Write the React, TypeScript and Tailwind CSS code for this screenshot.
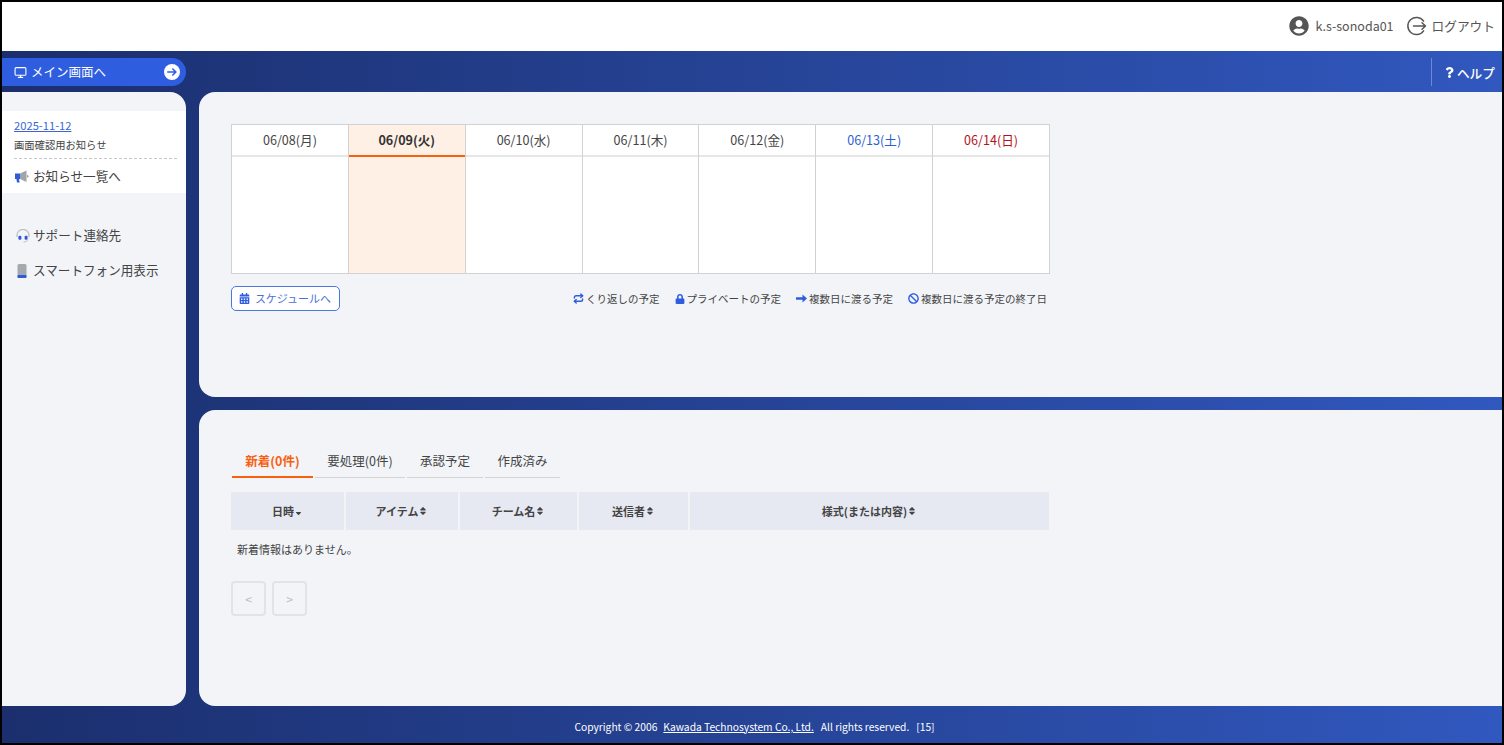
import React from 'react';
import { FaBan, FaCalendarAlt, FaLock, FaQuestion, FaSort, FaSortDown, FaUserCircle } from 'react-icons/fa';
import { Monitor, Repeat } from 'lucide-react';

const days = [
  { label: '06/08(月)', color: 'text-[#444]' },
  { label: '06/09(火)', color: 'text-[#333]', today: true },
  { label: '06/10(水)', color: 'text-[#444]' },
  { label: '06/11(木)', color: 'text-[#444]' },
  { label: '06/12(金)', color: 'text-[#444]' },
  { label: '06/13(土)', color: 'text-[#2f5fd0]' },
  { label: '06/14(日)', color: 'text-[#b5131c]' },
];

const tabs = [
  { label: '新着(0件)', width: 'w-[81px]', active: true },
  { label: '要処理(0件)', width: 'w-[90px]' },
  { label: '承認予定', width: 'w-[76px]' },
  { label: '作成済み', width: 'w-[75px]' },
];

const columns = [
  { label: '日時', width: 'w-[113px]', down: true },
  { label: 'アイテム', width: 'w-[112px]' },
  { label: 'チーム名', width: 'w-[117px]' },
  { label: '送信者', width: 'w-[109px]' },
  { label: '様式(または内容)', width: 'w-[359px]' },
];

function LogoutIcon() {
  return (
    <svg width="20" height="20" viewBox="0 0 20 20" fill="none" stroke="#555" strokeWidth="1.5" strokeLinecap="round" strokeLinejoin="round">
      <path d="M16.6 5.2A8.6 8.6 0 1 0 16.6 14.8" />
      <path d="M6.5 10H18.5M15 6.8L18.5 10L15 13.2" />
    </svg>
  );
}

function GoIcon() {
  return (
    <svg width="16" height="16" viewBox="0 0 16 16" fill="none" stroke="#2f5de0" strokeWidth="1.6" strokeLinecap="round" strokeLinejoin="round">
      <circle cx="8" cy="8" r="8" fill="#fff" stroke="none" />
      <path d="M3.8 8H11.8M8.8 5L11.9 8L8.8 11" />
    </svg>
  );
}

function ThickArrowIcon() {
  return (
    <svg width="11" height="9" viewBox="0 0 11 9" fill="#2f5de0">
      <path d="M0 3.2H6.5V0.6L11 4.5L6.5 8.4V5.8H0Z" />
    </svg>
  );
}

function MegaphoneIcon() {
  return (
    <svg width="14" height="13" viewBox="0 0 14 13">
      <path d="M0 3.5H5V9H4L4.6 12.6H2L1.4 9H0Z" fill="#2f5bd8" />
      <path d="M5 3.5L11.5 0.5V12L5 9Z" fill="#a0a4ab" />
      <path d="M12 4.5L14 6.2L12 8Z" fill="#a0a4ab" />
    </svg>
  );
}

function HeadsetIcon() {
  return (
    <svg width="14" height="14" viewBox="0 0 14 14" fill="none">
      <path d="M1 8V6.4A6 6 0 0 1 13 6.4V8" stroke="#bcc0c6" strokeWidth="1.3" />
      <rect x="2.4" y="6.8" width="3" height="4" rx="1.2" fill="#2f5bd8" />
      <rect x="8.6" y="6.8" width="3" height="4" rx="1.2" fill="#2f5bd8" />
      <path d="M12 10.4C11.2 12.6 9.4 13 7.5 13" stroke="#bcc0c6" strokeWidth="1" />
    </svg>
  );
}

function PhoneIcon() {
  return (
    <svg width="10" height="14" viewBox="0 0 10 14">
      <rect x="0.5" y="0" width="9" height="14" rx="1.5" fill="#a4a8af" />
      <rect x="0.5" y="11" width="9" height="3" rx="1" fill="#2f5bd8" />
    </svg>
  );
}

function Legend({ icon, label }: { icon: React.ReactNode; label: string }) {
  return (
    <span className="flex items-center gap-[2px]">
      {icon}
      <span>{label}</span>
    </span>
  );
}

export default function App() {
  return (
    <div className="h-[745px] w-[1504px] overflow-hidden border-2 border-black bg-white text-[#444] [font-family:'Noto_Sans_CJK_JP','Noto_Sans',sans-serif]">
      <header className="flex h-[49px] items-center justify-end pr-[7px] pb-[1px] text-[#555]">
        <FaUserCircle className="mr-[6px] text-[20px] text-[#555]" />
        <span className="text-[12.5px]">k.s-sonoda01</span>
        <span className="mr-[5px] ml-[13px]">
          <LogoutIcon />
        </span>
        <span className="text-[12.7px]">ログアウト</span>
      </header>

      <div className="flex h-[692px] flex-col bg-gradient-to-r from-[#1b2f6e] to-[#3158bf]">
        <nav className="flex h-[41px] shrink-0 justify-between">
          <a className="mt-[7px] flex h-[28px] w-[184px] items-center rounded-r-[14px] bg-[#2f5de0] pr-[6px] pl-[12px] text-[12.5px] text-white">
            <Monitor size={13} strokeWidth={2} className="mr-[4px]" />
            <span className="flex-1 pt-[1px]">メイン画面へ</span>
            <GoIcon />
          </a>
          <div className="mt-[7px] mr-[7px] flex h-[28px] items-center border-l border-[#6f88cf] pt-[1px] pl-[12px] text-[12.7px] font-medium text-white">
            <FaQuestion className="text-[11px]" />
            <span className="ml-[2px]">ヘルプ</span>
          </div>
        </nav>

        <div className="flex h-[614px] shrink-0 gap-[13px]">
          <aside className="w-[184px] shrink-0 rounded-r-[16px] bg-[#f2f4f8] pt-[19px] text-[12.6px]">
            <div className="bg-white pt-[6px]">
              <a className="ml-[12px] block text-[11.2px] leading-[16px] text-[#3a66d8] underline">2025-11-12</a>
              <p className="mt-[3px] mr-[9px] ml-[12px] border-b border-dashed border-[#c8c8c8] pb-[5px] text-[10.3px] leading-[17px]">画面確認用お知らせ</p>
              <div className="flex h-[34px] items-center pt-[1px] pl-[13px]">
                <MegaphoneIcon />
                <span className="ml-[4px]">お知らせ一覧へ</span>
              </div>
            </div>
            <div className="mt-[25px] flex h-[35px] items-center pl-[14px]">
              <HeadsetIcon />
              <span className="ml-[3px]">サポート連絡先</span>
            </div>
            <div className="flex h-[35px] items-center pl-[15px]">
              <PhoneIcon />
              <span className="ml-[6px]">スマートフォン用表示</span>
            </div>
          </aside>

          <main className="flex flex-1 flex-col gap-[13px]">
            <section className="h-[305px] rounded-l-[16px] bg-[#f2f4f8] pt-[32px] pl-[32px]">
              <div className="grid w-[819px] grid-cols-7 border-t border-l border-[#d2d2d2] bg-white">
                {days.map((day) => (
                  <div key={day.label} className={`border-r border-[#d2d2d2] ${day.today ? 'bg-[#fff0e5]' : ''}`}>
                    <div className={`flex h-[32px] items-center justify-center border-b-2 text-[12.6px] ${day.color} ${day.today ? 'border-[#f8600f] font-bold' : 'border-[#e6e6e6]'}`}>
                      {day.label}
                    </div>
                    <div className="h-[117px] border-b border-[#d2d2d2]" />
                  </div>
                ))}
              </div>
              <div className="mt-[12px] flex w-[816px] items-center justify-between">
                <a className="flex h-[25px] w-[109px] items-center justify-center rounded-[5px] border border-[#4c76e8] bg-white pr-[1px] text-[11px] text-[#4a6fd8]">
                  <FaCalendarAlt className="mr-[5px] text-[11px] text-[#2f5de0]" />
                  スケジュールへ
                </a>
                <div className="flex gap-[15px] text-[10.5px] text-[#444]">
                  <Legend icon={<Repeat size={11} strokeWidth={3} className="text-[#2f5de0]" />} label="くり返しの予定" />
                  <Legend icon={<FaLock className="text-[10px] text-[#2f5de0]" />} label="プライベートの予定" />
                  <Legend icon={<ThickArrowIcon />} label="複数日に渡る予定" />
                  <Legend icon={<FaBan className="text-[11px] text-[#2f5de0]" />} label="複数日に渡る予定の終了日" />
                </div>
              </div>
            </section>

            <section className="flex-1 rounded-l-[16px] bg-[#f2f4f8] pt-[36px] pl-[32px]">
              <div className="flex gap-[2px] pl-[1px]">
                {tabs.map((tab) => (
                  <div
                    key={tab.label}
                    className={`flex h-[32px] items-center justify-center border-b text-[12.5px] ${tab.width} ${tab.active ? 'border-b-2 border-[#f8600f] font-bold text-[#f8600f]' : 'border-[#d4d4d4]'}`}
                  >
                    {tab.label}
                  </div>
                ))}
              </div>
              <div className="mt-[14px] flex w-[818px] gap-[2px]">
                {columns.map((col) => (
                  <div key={col.label} className={`flex h-[38px] items-center justify-center bg-[#e6e9f2] text-[11px] font-bold text-[#444] ${col.width}`}>
                    {col.label}
                    {col.down ? <FaSortDown className="text-[9px]" /> : <FaSort className="text-[10px]" />}
                  </div>
                ))}
              </div>
              <p className="mt-[11px] pl-[6px] text-[11px] leading-[17px]">新着情報はありません。</p>
              <div className="mt-[23px] flex gap-[6px]">
                <button className="h-[35px] w-[35px] rounded-[4px] border-2 border-[#e2e3e6] text-[12px] text-[#bbb]">&lt;</button>
                <button className="h-[35px] w-[35px] rounded-[4px] border-2 border-[#e2e3e6] text-[12px] text-[#bbb]">&gt;</button>
              </div>
            </section>
          </main>
        </div>

        <footer className="flex h-[37px] items-center justify-center pt-[4px] pl-[5px] text-[10.25px] text-white">
          <span>Copyright © 2006</span>
          <a className="mr-[7px] ml-[6px] underline">Kawada Technosystem Co., Ltd.</a>
          <span>All rights reserved.</span>
          <span className="ml-[7px]">[15]</span>
        </footer>
      </div>
    </div>
  );
}
